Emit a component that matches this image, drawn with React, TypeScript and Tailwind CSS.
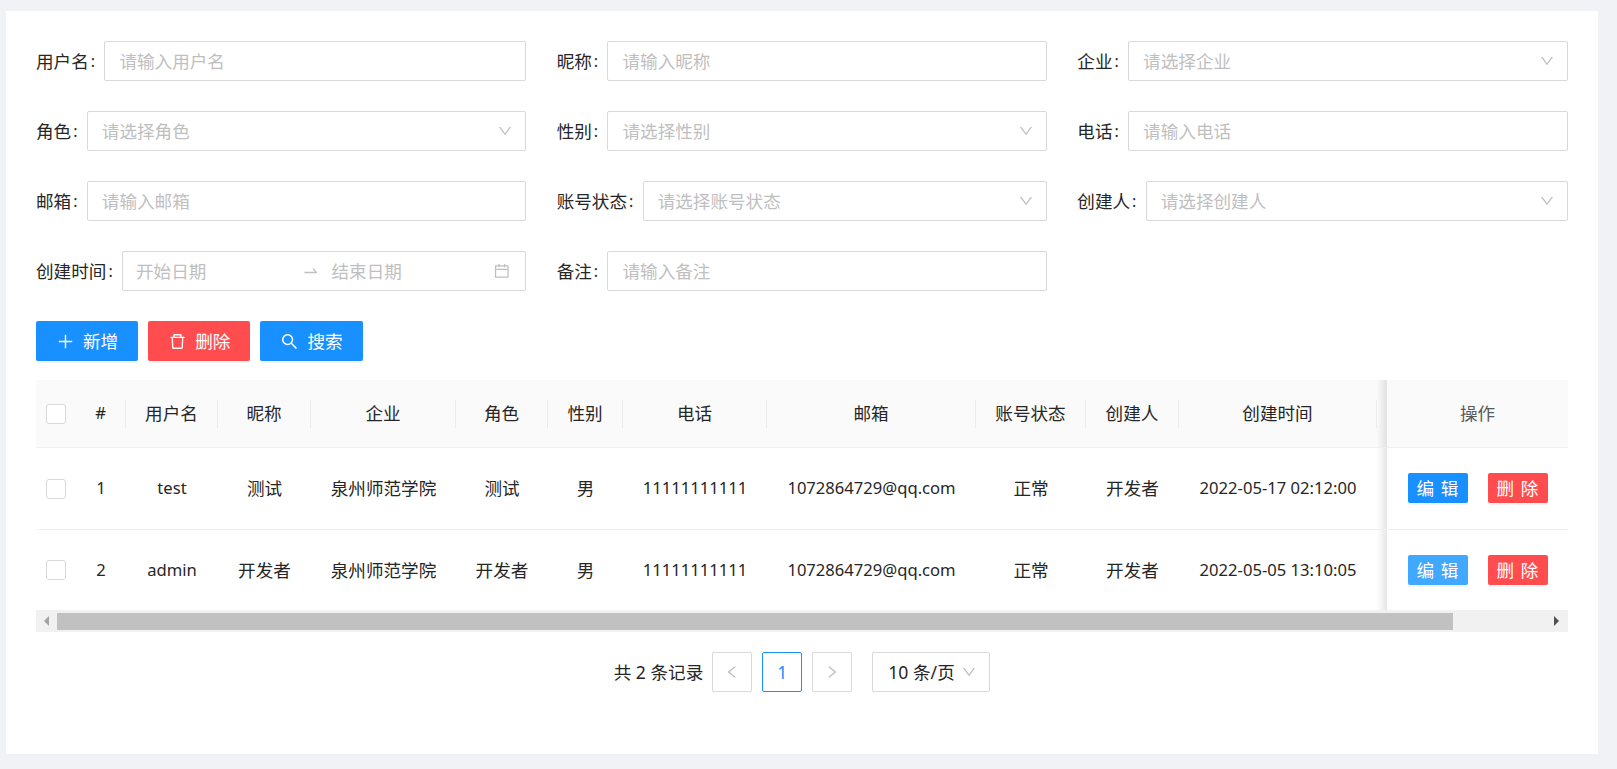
import React from 'react';
import {
  AiOutlineCalendar,
  AiOutlineDelete,
  AiOutlineDown,
  AiOutlineLeft,
  AiOutlinePlus,
  AiOutlineRight,
  AiOutlineSearch,
  AiOutlineSwapRight,
} from 'react-icons/ai';

const GRID = 'grid grid-cols-[40px_50px_92px_93px_145px_92px_75px_144px_209px_110px_93px_198px_10px_181px]';

const COLUMNS = ['#', '用户名', '昵称', '企业', '角色', '性别', '电话', '邮箱', '账号状态', '创建人', '创建时间'];

const ROWS = [
  ['1', 'test', '测试', '泉州师范学院', '测试', '男', '11111111111', '1072864729@qq.com', '正常', '开发者', '2022-05-17 02:12:00'],
  ['2', 'admin', '开发者', '泉州师范学院', '开发者', '男', '11111111111', '1072864729@qq.com', '正常', '开发者', '2022-05-05 13:10:05'],
];

// latin text runs a little smaller than the cjk text to keep its width
const isLatin = (text: string) => /^[\x00-\x7f]+$/.test(text);

function Field({ label, children }: { label: string; children: React.ReactNode }) {
  return (
    <div className="flex h-10 items-center">
      <label className="shrink-0 whitespace-nowrap">{label}</label>
      <span className="w-[15.6px] shrink-0 pl-[2px] text-[16px]">:</span>
      {children}
    </div>
  );
}

function TextInput({ placeholder }: { placeholder: string }) {
  return (
    <input
      placeholder={placeholder}
      className="h-10 min-w-0 flex-1 rounded-[2px] border border-[#d9d9d9] bg-white px-[14px] outline-none placeholder:text-[#bfbfbf]"
    />
  );
}

function SelectInput({ placeholder }: { placeholder: string }) {
  return (
    <div className="flex h-10 min-w-0 flex-1 items-center justify-between rounded-[2px] border border-[#d9d9d9] bg-white pl-[14px] pr-[12px]">
      <span className="text-[#bfbfbf]">{placeholder}</span>
      <AiOutlineDown className="text-[16px] text-[#bfbfbf]" />
    </div>
  );
}

function Checkbox() {
  return <span className="block h-5 w-5 rounded-[3px] border border-[#d9d9d9] bg-white" />;
}

function ToolButton({ color, icon, text }: { color: string; icon: React.ReactNode; text: string }) {
  return (
    <button type="button" className={`flex h-10 items-center gap-2 rounded-[2px] px-[20px] text-white shadow-[0_2px_0_rgba(0,0,0,0.045)] ${color}`}>
      {icon}
      <span>{text}</span>
    </button>
  );
}

export default function App() {
  return (
    <div className="h-screen overflow-hidden bg-[#f0f2f5] pb-[15px] pl-[6px] pr-[19px] pt-[11px] font-['Noto_Sans','Noto_Sans_CJK_SC',sans-serif] text-[17.6px] text-[#262626]">
      <div className="h-full bg-white px-[30px] pt-[30px]">
        <form className="grid grid-cols-[490px_490px_1fr] gap-x-[30.67px] gap-y-[30px]">
          <Field label="用户名"><TextInput placeholder="请输入用户名" /></Field>
          <Field label="昵称"><TextInput placeholder="请输入昵称" /></Field>
          <Field label="企业"><SelectInput placeholder="请选择企业" /></Field>
          <Field label="角色"><SelectInput placeholder="请选择角色" /></Field>
          <Field label="性别"><SelectInput placeholder="请选择性别" /></Field>
          <Field label="电话"><TextInput placeholder="请输入电话" /></Field>
          <Field label="邮箱"><TextInput placeholder="请输入邮箱" /></Field>
          <Field label="账号状态"><SelectInput placeholder="请选择账号状态" /></Field>
          <Field label="创建人"><SelectInput placeholder="请选择创建人" /></Field>
          <Field label="创建时间">
            <div className="flex h-10 min-w-0 flex-1 items-center rounded-[2px] border border-[#d9d9d9] bg-white pl-[13px] pr-[14px]">
              <span className="flex-1 text-[#bfbfbf]">开始日期</span>
              <AiOutlineSwapRight className="ml-1 mr-3 text-[17.6px] text-[#bfbfbf]" />
              <span className="flex-1 text-[#bfbfbf]">结束日期</span>
              <AiOutlineCalendar className="text-[17.6px] text-[#bfbfbf]" />
            </div>
          </Field>
          <Field label="备注"><TextInput placeholder="请输入备注" /></Field>
        </form>

        <div className="mt-[30px] flex gap-[10px]">
          <ToolButton color="bg-[#1890ff]" icon={<AiOutlinePlus className="text-[19px]" />} text="新增" />
          <ToolButton color="bg-[#ff4d4f]" icon={<AiOutlineDelete className="text-[19px]" />} text="删除" />
          <ToolButton color="bg-[#1890ff]" icon={<AiOutlineSearch className="text-[19px]" />} text="搜索" />
        </div>

        <div className="mt-[19px]">
          <div className={`${GRID} h-[68px] items-center border-b border-[#f0f0f0] bg-[#fafafa]`}>
            <div className="pl-[10px]"><Checkbox /></div>
            {COLUMNS.map((col) => (
              <div key={col} className={`flex h-7 items-center justify-center border-r border-[#ebebeb] ${isLatin(col) ? 'text-[16.6px]' : ''}`}>
                {col}
              </div>
            ))}
            <div className="h-full bg-linear-to-r from-transparent to-black/10" />
            <div className="flex h-full items-center justify-center bg-[#fafafa] text-[#595959]">操作</div>
          </div>

          {ROWS.map((row, i) => (
            <div key={row[0]} className={`${GRID} items-center border-[#f0f0f0] bg-white ${i === 0 ? 'h-[82px] border-b' : 'h-[80px]'}`}>
              <div className="pl-[10px]"><Checkbox /></div>
              {row.map((cell, j) => (
                <div key={j} className={`text-center whitespace-nowrap ${isLatin(cell) ? 'text-[16.6px]' : ''}`}>{cell}</div>
              ))}
              <div className="h-full bg-linear-to-r from-transparent to-black/10" />
              <div className={`flex h-full items-center justify-center gap-5 bg-white ${i === 0 ? 'pb-px' : ''}`}>
                <button type="button" className={`h-[30px] w-[60px] rounded-[2px] text-white shadow-[0_2px_0_rgba(0,0,0,0.045)] [word-spacing:2px] ${i === 0 ? 'bg-[#1890ff]' : 'bg-[#40a9ff]'}`}>编 辑</button>
                <button type="button" className="h-[30px] w-[60px] rounded-[2px] bg-[#ff4d4f] text-white shadow-[0_2px_0_rgba(0,0,0,0.045)] [word-spacing:2px]">删 除</button>
              </div>
            </div>
          ))}

          <div className="flex h-[22px] items-center bg-[#f1f1f1]">
            <div className="flex w-[21px] shrink-0 justify-center">
              <span className="h-0 w-0 border-y-[5px] border-r-[5px] border-y-transparent border-r-[#a3a3a3]" />
            </div>
            <div className="h-[17px] w-[1396px] bg-[#c1c1c1]" />
            <div className="flex flex-1 justify-end pr-[9px]">
              <span className="h-0 w-0 border-y-[5px] border-l-[5px] border-y-transparent border-l-[#505050]" />
            </div>
          </div>
        </div>

        <div className="mt-5 flex items-center justify-center">
          <span className="mr-[9px]">共 2 条记录</span>
          <div className="flex h-10 w-10 items-center justify-center rounded-[2px] border border-[#d9d9d9] text-[#bfbfbf]"><AiOutlineLeft className="text-[16px]" /></div>
          <div className="ml-[10px] flex h-10 w-10 items-center justify-center rounded-[2px] border border-[#1890ff] text-[#1890ff]">1</div>
          <div className="ml-[10px] flex h-10 w-10 items-center justify-center rounded-[2px] border border-[#d9d9d9] text-[#bfbfbf]"><AiOutlineRight className="text-[16px]" /></div>
          <div className="ml-5 flex h-10 w-[118px] items-center justify-between rounded-[2px] border border-[#d9d9d9] pl-[15px] pr-[12px]">
            <span>10 条/页</span>
            <AiOutlineDown className="text-[16px] text-[#bfbfbf]" />
          </div>
        </div>
      </div>
    </div>
  );
}
